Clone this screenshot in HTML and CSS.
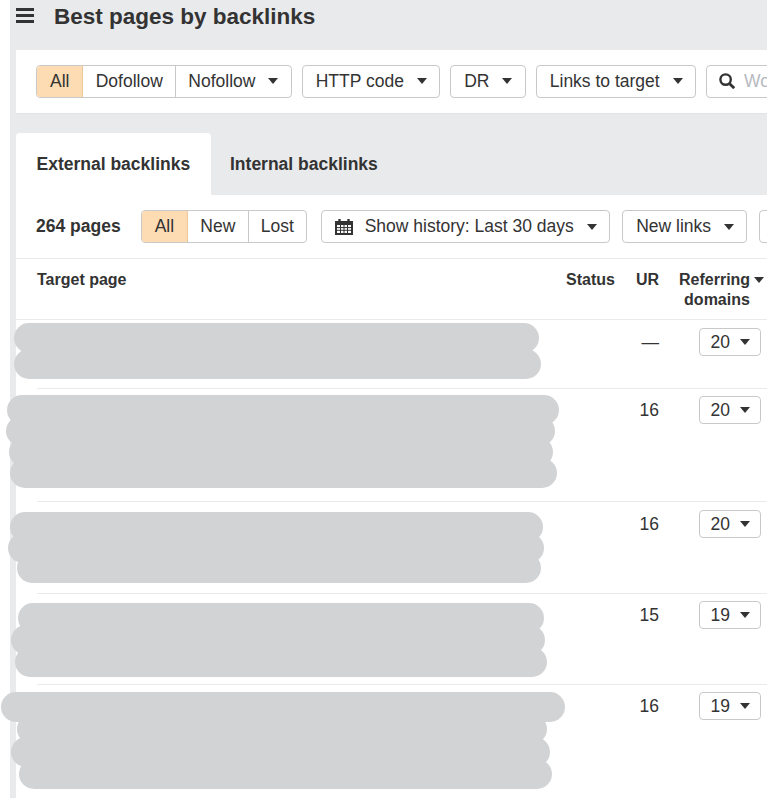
FILE: index.html
```html
<!DOCTYPE html>
<html lang="en">
<head>
<meta charset="utf-8">
<title>Best pages by backlinks</title>
<link rel="stylesheet" href="styles.css">
</head>
<body>
<main class="page">
  <header class="head">
    <span class="burger"><i></i><i></i><i></i></span>
    <h1>Best pages by backlinks</h1>
  </header>

  <section class="bar filters">
    <div class="group">
      <span class="seg on">All</span>
      <span class="seg">Dofollow</span>
      <span class="seg">Nofollow<b class="caret"></b></span>
    </div>
    <span class="btn">HTTP code<b class="caret"></b></span>
    <span class="btn">DR<b class="caret"></b></span>
    <span class="btn">Links to target<b class="caret"></b></span>
    <span class="btn search">
      <svg class="glass" viewBox="0 0 16 16" width="16" height="16"><circle cx="6.600" cy="6.600" r="5.200" fill="none" stroke="#333" stroke-width="2.400"/><path d="M10.400 10.400l4.800 4.800" stroke="#333" stroke-width="2.800" fill="none"/></svg>
      <span class="ph">Word or phrase</span>
    </span>
  </section>

  <nav class="tabs">
    <span class="tab active">External backlinks</span>
    <span class="tab">Internal backlinks</span>
  </nav>

  <section class="panel">
    <div class="bar tools">
      <strong class="count">264 pages</strong>
      <div class="group">
        <span class="seg on">All</span>
        <span class="seg">New</span>
        <span class="seg">Lost</span>
      </div>
      <span class="btn hist">
        <svg class="cal" viewBox="0 0 18 16" width="18" height="16"><path d="M0 2h18v14H0z" fill="#333"/><path d="M4.500 0v3M13.500 0v3" stroke="#333" stroke-width="2.400"/><path d="M2 6h14v8H2z" fill="#fff"/><path d="M2 8.600h14M2 11.300h14M5.500 6v8M9 6v8M12.500 6v8" stroke="#333" stroke-width="1"/></svg>
        Show history: Last 30 days<b class="caret"></b>
      </span>
      <span class="btn">New links<b class="caret"></b></span>
      <span class="btn">Filter<b class="caret"></b></span>
    </div>

    <div class="cols thead">
      <span>Target page</span>
      <span class="status">Status</span>
      <span class="ur">UR</span>
      <span class="ref">Referring<b class="caret small"></b><br>domains</span>
    </div>

    <div class="cols row first">
      <div class="target">
        <div class="smudge" style="margin-left:-23px;width:525px"></div>
        <div class="smudge" style="margin-left:-23px;width:527px"></div>
      </div>
      <span></span>
      <span class="ur num">—</span>
      <span class="cellbtn"><span class="btn mini">20<b class="caret"></b></span></span>
    </div>

    <div class="cols row r2">
      <div class="target">
        <div class="smudge" style="margin-left:-30px;width:552px"></div>
        <div class="smudge" style="margin-left:-31px;width:549px"></div>
        <div class="smudge" style="margin-left:-28px;width:544px"></div>
        <div class="smudge" style="margin-left:-27px;width:547px"></div>
      </div>
      <span></span>
      <span class="ur num">16</span>
      <span class="cellbtn"><span class="btn mini">20<b class="caret"></b></span></span>
    </div>

    <div class="cols row r3">
      <div class="target">
        <div class="smudge" style="margin-left:-27px;width:533px"></div>
        <div class="smudge" style="margin-left:-29px;width:536px"></div>
        <div class="smudge" style="margin-left:-20px;width:524px"></div>
      </div>
      <span></span>
      <span class="ur num">16</span>
      <span class="cellbtn"><span class="btn mini">20<b class="caret"></b></span></span>
    </div>

    <div class="cols row r4">
      <div class="target">
        <div class="smudge" style="margin-left:-19px;width:526px"></div>
        <div class="smudge" style="margin-left:-26px;width:534px"></div>
        <div class="smudge" style="margin-left:-22px;width:532px"></div>
      </div>
      <span></span>
      <span class="ur num">15</span>
      <span class="cellbtn"><span class="btn mini">19<b class="caret"></b></span></span>
    </div>

    <div class="cols row r5">
      <div class="target">
        <div class="smudge" style="margin-left:-36px;width:564px"></div>
        <div class="smudge" style="margin-left:-20px;width:530px"></div>
        <div class="smudge" style="margin-left:-26px;width:539px"></div>
        <div class="smudge" style="margin-left:-18px;width:533px"></div>
      </div>
      <span></span>
      <span class="ur num">16</span>
      <span class="cellbtn"><span class="btn mini">19<b class="caret"></b></span></span>
    </div>
  </section>
</main>
</body>
</html>
```

FILE: styles.css
```css
* { box-sizing: border-box; }
html, body { margin: 0; height: 100%; background: #fff; overflow: hidden; }
body { font-family: "Liberation Sans", Arial, sans-serif; font-size: 17.5px; color: #333; }

.page { margin-left: 10px; width: 757px; height: 798px; padding-left: 6px; background: #e9eaec; }

.head { height: 50px; display: flex; align-items: flex-start; }
.burger { width: 18px; margin-top: 8px; display: flex; flex-direction: column; gap: 3px; }
.burger i { display: block; height: 3px; background: #333; }
h1 { margin: 3px 0 0 20px; font-size: 22.500px; line-height: 27px; font-weight: 700; white-space: nowrap; }

.bar { display: flex; align-items: center; background: #fff; white-space: nowrap; overflow: hidden; }
.filters { height: 64px; padding: 0 0 1px 20px; gap: 10px; border-bottom: 1px solid #e2e3e5; }

.group { display: flex; height: 33px; border: 1px solid #c9c9c9; border-radius: 4px; flex: none; }
.seg { display: flex; align-items: center; padding: 0 12.250px; border-left: 1px solid #c9c9c9; }
.seg:first-child { border-left: 0; border-radius: 3px 0 0 3px; }
.seg.on { padding: 0 13px; background: #fddcb3; border-right: 1px solid #ecc89a; }
.seg.on + .seg { border-left: 0; }

.btn { display: flex; align-items: center; flex: none; height: 33px; padding: 0 12.300px 0 13px; border: 1px solid #c9c9c9; border-radius: 4px; background: #fff; }
.caret { display: inline-block; width: 0; height: 0; margin-left: 13px; border: 5px solid transparent; border-top: 6px solid #333; border-bottom: 0; }

.search { width: 120px; padding-left: 12px; border-radius: 4px 0 0 4px; }
.glass { flex: none; margin-right: 9px; }
.ph { color: #b6bac0; }

.tabs { display: flex; margin-top: 19px; height: 62px; }
.tab { display: flex; align-items: center; padding: 0 19px; font-weight: 700; border-radius: 4px 4px 0 0; }
.tab.active { width: 195px; padding-left: 20.500px; background: #fff; }

.panel { background: #fff; height: 603px; }
.tools { height: 64px; padding-left: 20px; border-bottom: 1px solid #e9eaec; }
.count { margin-right: 20px; }
.tools .group { margin-right: 13.500px; }
.tools .btn { margin-right: 12px; }
.cal { margin-right: 12px; flex: none; }

.cols { display: grid; grid-template-columns: 519px 69px 50px 92px; margin-left: 21px; align-items: start; }
.thead { height: 61px; margin-left: 0; padding: 11px 0 0 21px; font-weight: 700; font-size: 16px; line-height: 20px; border-bottom: 1px solid #e9eaec; }
.status { text-align: right; padding-right: 10px; white-space: nowrap; }
.ur { text-align: right; padding-right: 16px; }
.ref { width: 76px; margin-left: 4px; text-align: center; white-space: nowrap; }
.caret.small { margin: 0 -9px 2px 4px; vertical-align: middle; }

.row { border-top: 1px solid #e9eaec; }
.row.first { border-top-color: transparent; }
.num { padding-top: 10px; line-height: 22px; }
.cellbtn { display: flex; justify-content: flex-end; padding: 7px 6px 0 0; }
.mini { height: 28px; padding: 0 10px 0 11px; }
.mini .caret { margin-left: 10px; }
.r3 .num { padding-top: 11px; }
.r3 .cellbtn { padding-top: 8px; }

.target { padding: 2px 0 9px; }
.smudge { height: 30px; border-radius: 15px; background: #d2d3d5; }
.first .smudge + .smudge { margin-top: -4px; }
.r2 .target { padding: 6px 0 13px; }
.r2 .smudge + .smudge { margin-top: -9px; }
.r3 .target { padding: 10px 0 10px; }
.r3 .smudge + .smudge { margin-top: -9.500px; }
.r4 .target { padding: 9px 0 7px; }
.r4 .smudge + .smudge { margin-top: -8px; }
.r5 .target { padding: 7px 0 0; }
.r5 .smudge + .smudge { margin-top: -7.667px; }
```
